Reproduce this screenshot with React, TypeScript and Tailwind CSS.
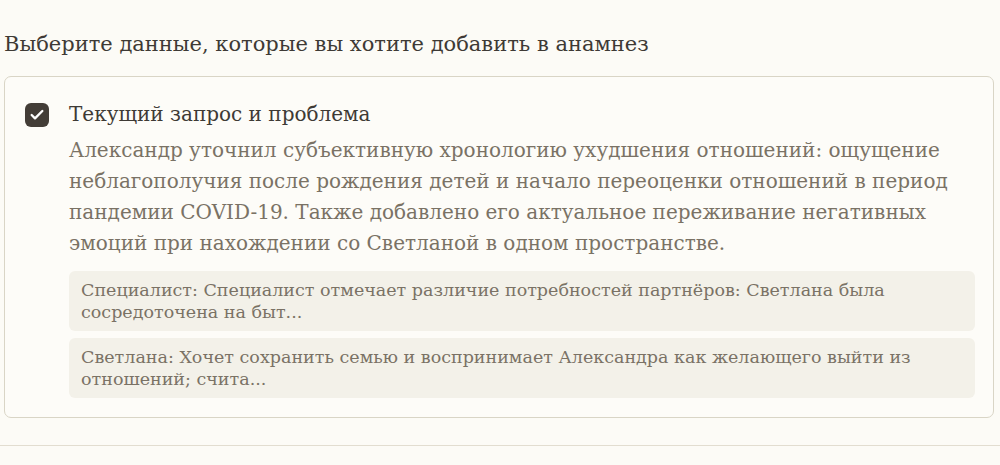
import { Check } from 'lucide-react';

const NOTES = [
  'Специалист: Специалист отмечает различие потребностей партнёров: Светлана была сосредоточена на быт...',
  'Светлана: Хочет сохранить семью и воспринимает Александра как желающего выйти из отношений; счита...',
];

export default function App() {
  return (
    <div className="min-h-[465px] bg-[#fcfbf6] text-[#3e3a35] font-['DejaVu_Serif',serif]">
      <div className="pl-[4px] pr-[6px] pt-[30px]">
        <h2 className="text-[21px] leading-[28px]">Выберите данные, которые вы хотите добавить в анамнез</h2>

        <div className="mt-[18px] rounded-[7px] border border-[#d9d5c6] bg-[#fdfcf8] pl-[20px] pr-[18px] pt-[22px] pb-[19px]">
          <div className="flex gap-[20px]">
            <div className="mt-[4px] flex h-[24px] w-[24px] shrink-0 items-center justify-center rounded-[6px] bg-[#433d37]">
              <Check className="h-[16px] w-[16px] text-white" strokeWidth={3.5} />
            </div>
            <div className="flex-1">
              <div className="text-[20px] leading-[30px] text-[#3e3a35]">Текущий запрос и проблема</div>
              <p className="mt-[6px] text-[20px] leading-[31px] text-[#7a7265]">
                Александр уточнил субъективную хронологию ухудшения отношений: ощущение неблагополучия после
                рождения детей и начало переоценки отношений в период пандемии COVID-19. Также добавлено его
                актуальное переживание негативных эмоций при нахождении со Светланой в одном пространстве.
              </p>
              <div className="mt-[12px] flex flex-col gap-[7px]">
                {NOTES.map(n => (
                  <div key={n} className="rounded-[6px] bg-[#f3f1e9] px-[12px] py-[8px] text-[17.5px] leading-[22px] text-[#7a7265]">
                    {n}
                  </div>
                ))}
              </div>
            </div>
          </div>
        </div>
      </div>
      <div className="mt-[27px] border-t border-[#e2ddd0]" />
    </div>
  );
}
